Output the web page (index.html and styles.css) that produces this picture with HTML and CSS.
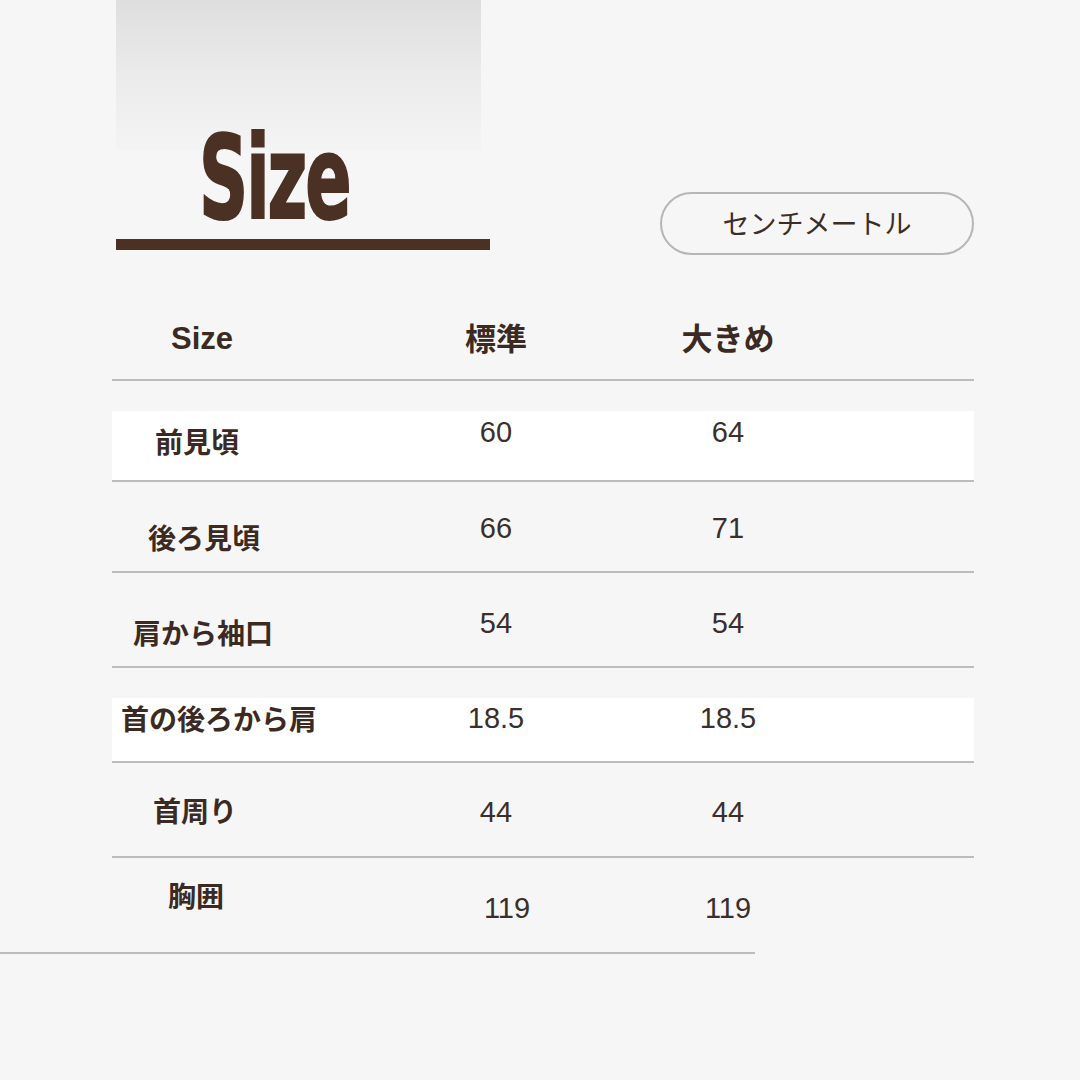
FILE: index.html
```html
<!DOCTYPE html>
<html lang="ja">
<head>
<meta charset="utf-8">
<title>Size</title>
<link rel="stylesheet" href="styles.css">
</head>
<body>
<div class="page">
  <header class="top">
    <div class="title-block">
      <div class="title-panel">
        <h1 class="title">Size</h1>
      </div>
      <div class="title-bar"></div>
    </div>
    <div class="unit-pill">センチメートル</div>
  </header>

  <section class="table">
    <div class="row head">
      <div class="label latin">Size</div>
      <div class="num c1">標準</div>
      <div class="num c2">大きめ</div>
    </div>
    <div class="row r1 band">
      <div class="label">前見頃</div>
      <div class="num c1">60</div>
      <div class="num c2">64</div>
    </div>
    <div class="row r2">
      <div class="label">後ろ見頃</div>
      <div class="num c1">66</div>
      <div class="num c2">71</div>
    </div>
    <div class="row r3">
      <div class="label">肩から袖口</div>
      <div class="num c1">54</div>
      <div class="num c2">54</div>
    </div>
    <div class="row r4 band">
      <div class="label">首の後ろから肩</div>
      <div class="num c1">18.5</div>
      <div class="num c2">18.5</div>
    </div>
    <div class="row r5">
      <div class="label">首周り</div>
      <div class="num c1">44</div>
      <div class="num c2">44</div>
    </div>
    <div class="row r6 last">
      <div class="label">胸囲</div>
      <div class="num c1">119</div>
      <div class="num c2">119</div>
    </div>
  </section>
  <div class="end-rule"></div>
</div>
</body>
</html>
```

FILE: styles.css
```css
* { box-sizing: border-box; margin: 0; padding: 0; }

html, body {
  width: 1080px;
  height: 1080px;
  background: #f6f6f6;
  overflow: hidden;
}

body {
  font-family: "Liberation Sans", "Noto Sans CJK JP", sans-serif;
  color: #3b2b23;
}

.page {
  width: 1080px;
  height: 1080px;
}

/* ---------- top ---------- */
.top {
  display: flex;
  align-items: flex-start;
  height: 260px;
}

.title-block {
  margin-left: 116px;
  width: 374px;
}

.title-panel {
  width: 365px;
  height: 239px;
  padding-top: 121px;
  padding-left: 83px;
  background: linear-gradient(to bottom, #dedede 0, #eaeaea 70px, #f4f4f4 150px) no-repeat top left / 100% 150px;
}

.title {
  font-family: "DejaVu Sans Condensed", "DejaVu Sans", sans-serif;
  font-weight: 700;
  font-size: 115px;
  line-height: 115px;
  color: #4a3124;
  letter-spacing: -3px;
  -webkit-text-stroke: 2px #4a3124;
  transform: scaleX(0.66);
  transform-origin: left top;
  white-space: nowrap;
}

.title-bar {
  width: 374px;
  height: 11px;
  background: #4a3124;
}

.unit-pill {
  margin-top: 192px;
  margin-left: 170px;
  width: 314px;
  height: 63px;
  border: 2px solid #b6b6b6;
  border-radius: 32px;
  display: flex;
  align-items: center;
  justify-content: center;
  font-family: "Noto Sans CJK JP", sans-serif;
  font-size: 27px;
  font-weight: 400;
  color: #3a2e28;
  padding-bottom: 2px;
}

/* ---------- table ---------- */
.table {
  margin-left: 112px;
  width: 862px;
}

.row {
  display: grid;
  grid-template-columns: 210px 98px 152px 80px 152px 1fr;
  align-items: start;
  border-bottom: 2px solid #bcbcbc;
}

.row.last { border-bottom: none; }

.band {
  background: linear-gradient(to bottom, transparent 30px, #ffffff 30px);
}

.label {
  grid-column: 1;
  font-family: "Noto Sans CJK JP", sans-serif;
  font-weight: 700;
  font-size: 28px;
  line-height: 40px;
  white-space: nowrap;
  color: #3b2a22;
}

.num {
  font-family: "Liberation Sans", sans-serif;
  font-size: 29px;
  line-height: 40px;
  text-align: center;
  color: #3a2f2a;
  padding-top: 30px;
}

.num.c1 { grid-column: 3; }
.num.c2 { grid-column: 5; }

/* header */
.head { height: 121px; }
.head .label.latin {
  font-family: "Liberation Sans", sans-serif;
  font-size: 31px;
  padding: 59px 0 0 59px;
}
.head .num {
  font-family: "Noto Sans CJK JP", sans-serif;
  font-weight: 700;
  font-size: 31px;
  padding-top: 57px;
  color: #3b2a22;
}

/* body rows */
.r1 { height: 101px; }
.r1 .label { padding: 40px 0 0 43px; }
.r1 .num { padding-top: 31px; }

.r2 { height: 91px; }
.r2 .label { padding: 35px 0 0 36px; }
.r2 .num { padding-top: 26px; }

.r3 { height: 95px; }
.r3 .label { padding: 39px 0 0 21px; }

.r4 { height: 95px; }
.r4 .label { padding: 30px 0 0 9px; }

.r5 { height: 95px; }
.r5 .label { padding: 27px 0 0 41px; }
.r5 .num { padding-top: 29px; }

.r6 { height: 94px; }
.r6 .label { padding: 17px 0 0 56px; }
.r6 .num.c1 { padding-left: 22px; }

.end-rule {
  width: 755px;
  height: 2px;
  background: #bcbcbc;
}
```
